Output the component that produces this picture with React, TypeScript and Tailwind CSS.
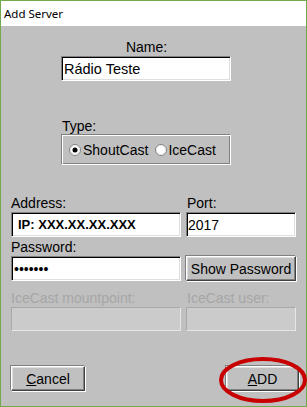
const sunken =
  "border border-t-[#808080] border-l-[#808080] border-b-white border-r-white shadow-[inset_1px_1px_0_#000,inset_-1px_-1px_0_#dfdfdf]";
const raised =
  "border border-t-white border-l-white border-b-[#404040] border-r-[#404040] shadow-[inset_-1px_-1px_0_#808080,inset_1px_1px_0_#dfdfdf,-1px_-1px_0_#808080,1px_1px_0_#fff]";
const disabledBox =
  "border border-t-[#a8a8a8] border-l-[#a8a8a8] border-b-[#e6e6e6] border-r-[#e6e6e6] bg-[#cbcbcb]";

const Radio = ({ checked }: { checked?: boolean }) => (
  <svg width="12" height="12" viewBox="0 0 12 12" className="shrink-0">
    <circle cx="6" cy="6" r="5.5" fill="#fff" stroke="#808080" />
    <circle cx="6" cy="6" r="4.5" fill="none" stroke="#e6e6e6" />
    {checked && <circle cx="6" cy="6" r="2.5" fill="#000" />}
  </svg>
);

const App = () => {
  return (
    <div
      className="w-[307px] h-[407px] border border-[#72a94f] flex flex-col text-[14px] leading-[16px] text-black"
      style={{ fontFamily: '"Liberation Sans", Arial, sans-serif' }}
    >
      {/* title bar */}
      <div
        className="h-[25px] bg-white flex items-center px-[3px] text-[11.5px]"
        style={{ fontFamily: '"Noto Sans", "Open Sans", sans-serif' }}
      >
        Add Server
      </div>

      <div className="flex-1 bg-[#c0c0c0] flex flex-col pl-[10px] pr-[9px] pt-[13px]">
        {/* Name */}
        <div className="ml-[50px] w-[170px] flex flex-col">
          <div className="text-center pl-[1px]">Name:</div>
          <div className={`mt-[1px] h-[25px] bg-white flex items-center pl-[2px] text-[14.5px] ${sunken}`}>
            Rádio Teste
          </div>

          {/* Type */}
          <div className="mt-[37px] pl-[1px]">Type:</div>
          <div className="h-[31px] border border-t-[#808080] border-l-[#808080] border-b-white border-r-white shadow-[inset_1px_1px_0_#fff,inset_-1px_-1px_0_#808080] flex items-center pl-[7px]">
            <Radio checked />
            <span className="ml-[2px]">ShoutCast</span>
            <span className="ml-[7px]">
              <Radio />
            </span>
            <span className="ml-[1px]">IceCast</span>
          </div>
        </div>

        {/* Address / Port */}
        <div className="mt-[30px] grid grid-cols-[170px_110px] gap-x-[5px]">
          <div>Address:</div>
          <div className="pl-[1px]">Port:</div>
          <div className={`mt-[1px] h-[25px] bg-white flex items-center pl-[6px] text-[13px] font-bold ${sunken}`}>
            IP: XXX.XX.XX.XXX
          </div>
          <div className={`mt-[1px] h-[25px] bg-white flex items-center pl-[1px] ${sunken}`}>2017</div>

          <div className="mt-[2px]">Password:</div>
          <div />
          <div className={`mt-[1px] h-[25px] bg-white flex items-center pl-[2px] ${sunken}`}>•••••••</div>
          <button className={`mt-[1px] h-[25px] bg-[#c0c0c0] text-[14px] ${raised}`}>Show Password</button>

          <div className="mt-[9px] text-[#a6a6a6]">IceCast mountpoint:</div>
          <div className="mt-[9px] pl-[1px] text-[#a6a6a6]">IceCast user:</div>
          <div className={`mt-[1px] h-[24px] ${disabledBox}`} />
          <div className={`mt-[1px] h-[24px] ${disabledBox}`} />
        </div>

        {/* buttons */}
        <div className="mt-[35px] flex justify-between items-start">
          <button className={`w-[74px] h-[25px] bg-[#c0c0c0] ${raised}`}>
            <u>C</u>ancel
          </button>
          <div className="relative -mr-[2px]">
            <button className={`w-[73px] h-[25px] bg-[#c0c0c0] ${raised}`}>
              <u>A</u>DD
            </button>
            <svg
              width="88"
              height="46"
              viewBox="0 0 88 46"
              className="absolute left-[-7px] top-[-9px] pointer-events-none"
            >
              <ellipse cx="44" cy="23" rx="42" ry="21" fill="none" stroke="#c80000" strokeWidth="4" />
            </svg>
          </div>
        </div>
      </div>
    </div>
  );
};

export default App;
